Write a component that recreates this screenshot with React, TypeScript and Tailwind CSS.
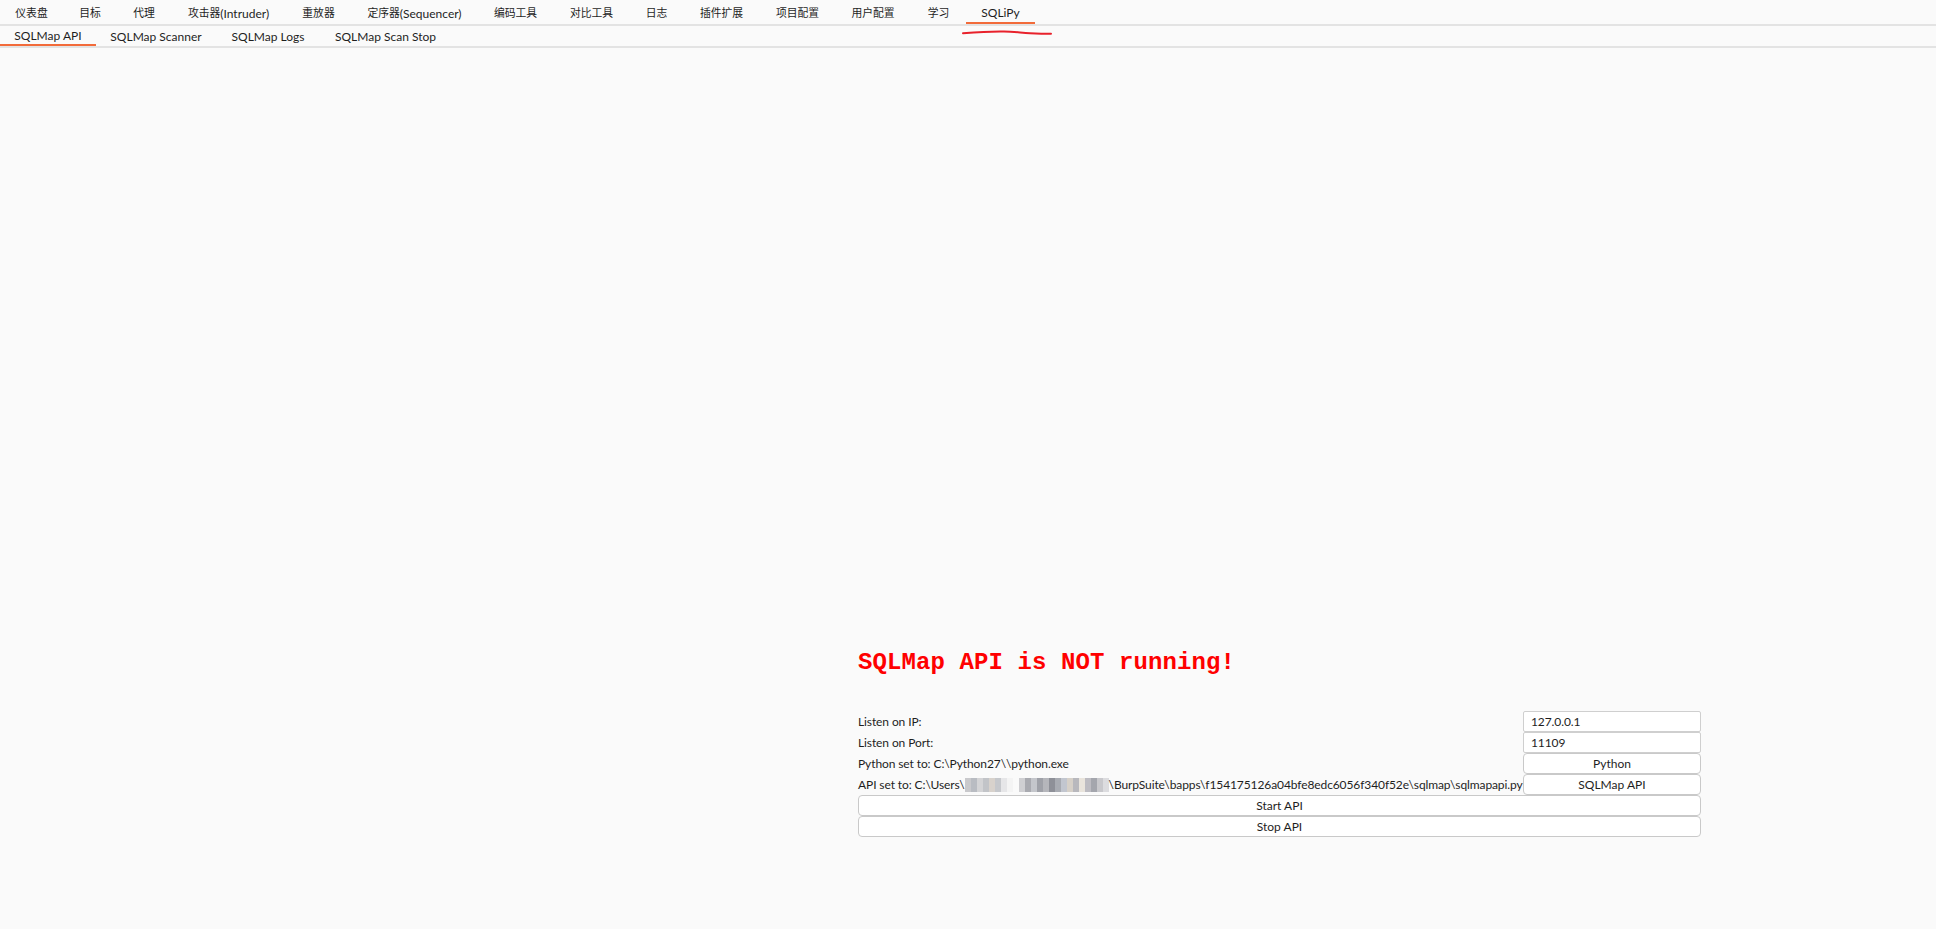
import React from 'react';

type Tab = { zh?: string; en?: string; w: string };

// widths measured from the original so the labels land where Burp puts them
const mainTabs: Tab[] = [
  { zh: '仪表盘', w: 'w-[63px]' },
  { zh: '目标', w: 'w-[54px]' },
  { zh: '代理', w: 'w-[54px]' },
  { zh: '攻击器', en: '(Intruder)', w: 'w-[115px]' },
  { zh: '重放器', w: 'w-[65px]' },
  { zh: '定序器', en: '(Sequencer)', w: 'w-[127px]' },
  { zh: '编码工具', w: 'w-[75px]' },
  { zh: '对比工具', w: 'w-[77px]' },
  { zh: '日志', w: 'w-[53px]' },
  { zh: '插件扩展', w: 'w-[77px]' },
  { zh: '项目配置', w: 'w-[75px]' },
  { zh: '用户配置', w: 'w-[76px]' },
  { zh: '学习', w: 'w-[55px]' },
  { en: 'SQLiPy', w: 'w-[69px]' },
];

const subTabs = [
  { label: 'SQLMap API', w: 'w-[96px]' },
  { label: 'SQLMap Scanner', w: 'w-[120px]' },
  { label: 'SQLMap Logs', w: 'w-[104px]' },
  { label: 'SQLMap Scan Stop', w: 'w-[131px]' },
];

// pixelated part of the path (username was blurred in the screenshot)
const blurCells = [
  '#c9c9cc', '#b9bcc2', '#d4d4d6', '#c2c4c8', '#d8d2cc', '#c6c8cc', '#e6e6e8', '#f4f4f4',
  '#fafafa', '#cfcfd2', '#a9aab0', '#c4c6cb', '#9fa1a8', '#b5b6bb', '#8e9098', '#a8abb2',
  '#c2c6cf', '#d6d0c8', '#b8b8bd', '#e9e4dc', '#bdbcc2', '#a4a6ad', '#c8c8cc', '#dcdcdf',
];

export default function App() {
  return (
    <div
      className="min-h-[929px] bg-[#fafafa] text-[12px] text-[#1e1e1e] relative"
      style={{ fontFamily: 'Lato, "Noto Sans CJK SC", sans-serif' }}
    >
      {/* main tabs */}
      <div className="flex border-b-2 border-[#e3e3e3] h-[26px]">
        {mainTabs.map((t, i) => {
          const active = t.en === 'SQLiPy';
          return (
            <div
              key={i}
              className={`${t.w} h-[24px] flex items-center justify-center pt-[3px] whitespace-nowrap ${active ? 'border-b-2 border-[#f26b3a]' : ''}`}
            >
              {t.zh && <span className="text-[10.8px]">{t.zh}</span>}
              {t.en && <span>{t.en}</span>}
            </div>
          );
        })}
      </div>

      {/* hand-drawn red mark under SQLiPy */}
      <svg className="absolute left-[962px] top-[30px]" width="90" height="6" viewBox="0 0 90 6">
        <path
          d="M1 3.2 C 14 2.2, 30 1.3, 42 1.5 C 52 1.6, 58 2.6, 68 3.2 C 76 3.6, 83 3.8, 89 3.8"
          fill="none"
          stroke="#e8212b"
          strokeWidth="2"
          strokeLinecap="round"
        />
      </svg>

      {/* sub tabs */}
      <div className="flex border-b-2 border-[#e3e3e3] h-[22px]">
        {subTabs.map((s, i) => (
          <div
            key={s.label}
            className={`${s.w} h-[20px] flex items-center justify-center pt-[1px] ${i === 0 ? 'border-b-2 border-[#f26b3a]' : ''}`}
          >
            {s.label}
          </div>
        ))}
      </div>

      {/* SQLMap API panel */}
      <div className="pl-[858px] pt-[601px]">
        <div className="w-[843px]">
          <div
            className="text-[24px] leading-[28px] font-bold text-[#ff0000] tracking-[0.1px]"
            style={{ fontFamily: '"Liberation Mono", "Courier New", monospace' }}
          >
            SQLMap API is NOT running!
          </div>

          <div className="mt-[34px] grid grid-cols-[665px_178px] tracking-[-0.1px]">
            <div className="h-[21px] flex items-center">Listen on IP:</div>
            <input
              className="h-[21px] bg-white border border-[#cfcfcf] rounded-[2px] px-[7px] text-[12px] outline-none"
              defaultValue="127.0.0.1"
            />
            <div className="h-[21px] flex items-center">Listen on Port:</div>
            <input
              className="h-[21px] bg-white border border-[#cfcfcf] rounded-[2px] px-[7px] text-[12px] outline-none"
              defaultValue="11109"
            />
            <div className="h-[21px] flex items-center">Python set to: C:\Python27\\python.exe</div>
            <button className="h-[21px] bg-white border border-[#c9c9c9] rounded-[4px] text-[12px] tracking-normal">Python</button>
            <div className="h-[21px] flex items-center whitespace-nowrap">
              API set to: C:\Users\
              <span className="inline-flex h-[14px]">
                {blurCells.map((c, i) => (
                  <span key={i} className="w-[6px] h-[14px]" style={{ background: c }} />
                ))}
              </span>
              \BurpSuite\bapps\f154175126a04bfe8edc6056f340f52e\sqlmap\sqlmapapi.py
            </div>
            <button className="h-[21px] bg-white border border-[#c9c9c9] rounded-[4px] text-[12px] tracking-normal">SQLMap API</button>
          </div>
          <button className="w-full h-[21px] bg-white border border-[#c9c9c9] rounded-[4px] text-[12px] block">
            Start API
          </button>
          <button className="w-full h-[21px] bg-white border border-[#c9c9c9] rounded-[4px] text-[12px] block">
            Stop API
          </button>
        </div>
      </div>
    </div>
  );
}
